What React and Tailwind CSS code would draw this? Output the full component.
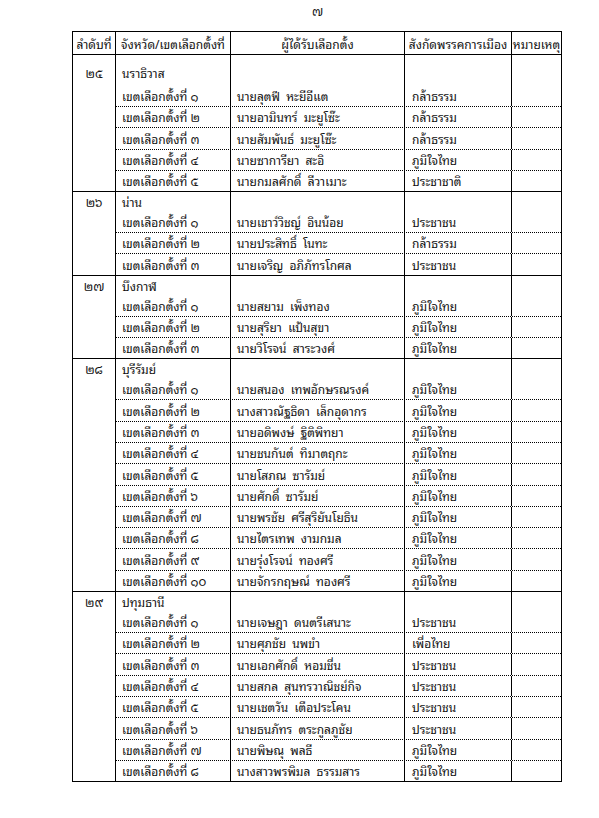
// Thai election results table, page 7
const thaiDigits = '๐๑๒๓๔๕๖๗๘๙'
const toThai = (n) => String(n).split('').map((d) => thaiDigits[+d]).join('')

const SECTIONS = [
  {
    no: 25,
    province: 'นราธิวาส',
    rows: [
      ['นายลุตฟี  หะยีอีแต', 'กล้าธรรม'],
      ['นายอามินทร์  มะยูโซ๊ะ', 'กล้าธรรม'],
      ['นายสัมพันธ์  มะยูโซ๊ะ', 'กล้าธรรม'],
      ['นายซาการียา  สะอิ', 'ภูมิใจไทย'],
      ['นายกมลศักดิ์  ลีวาเมาะ', 'ประชาชาติ'],
    ],
  },
  {
    no: 26,
    province: 'น่าน',
    rows: [
      ['นายเชาว์วิชญ์  อินน้อย', 'ประชาชน'],
      ['นายประสิทธิ์  โนทะ', 'กล้าธรรม'],
      ['นายเจริญ  อภิภัทรโกศล', 'ประชาชน'],
    ],
  },
  {
    no: 27,
    province: 'บึงกาฬ',
    rows: [
      ['นายสยาม  เพ็งทอง', 'ภูมิใจไทย'],
      ['นายสุริยา  แป้นสุขา', 'ภูมิใจไทย'],
      ['นายวิโรจน์  สาระวงศ์', 'ภูมิใจไทย'],
    ],
  },
  {
    no: 28,
    province: 'บุรีรัมย์',
    rows: [
      ['นายสนอง  เทพอักษรณรงค์', 'ภูมิใจไทย'],
      ['นางสาวณัฐธิดา  เล็กอุดากร', 'ภูมิใจไทย'],
      ['นายอดิพงษ์  ฐิติพิทยา', 'ภูมิใจไทย'],
      ['นายชนกันต์  ทิมาตฤกะ', 'ภูมิใจไทย'],
      ['นายโสภณ  ซารัมย์', 'ภูมิใจไทย'],
      ['นายศักดิ์  ซารัมย์', 'ภูมิใจไทย'],
      ['นายพรชัย  ศรีสุริยันโยธิน', 'ภูมิใจไทย'],
      ['นายไตรเทพ  งามกมล', 'ภูมิใจไทย'],
      ['นายรุ่งโรจน์  ทองศรี', 'ภูมิใจไทย'],
      ['นายจักรกฤษณ์  ทองศรี', 'ภูมิใจไทย'],
    ],
  },
  {
    no: 29,
    province: 'ปทุมธานี',
    rows: [
      ['นายเจษฎา  ดนตรีเสนาะ', 'ประชาชน'],
      ['นายศุภชัย  นพขำ', 'เพื่อไทย'],
      ['นายเอกศักดิ์  หอมชื่น', 'ประชาชน'],
      ['นายสกล  สุนทรวาณิชย์กิจ', 'ประชาชน'],
      ['นายเชตวัน  เตือประโคน', 'ประชาชน'],
      ['นายธนภัทร  ตระกูลภูชัย', 'ประชาชน'],
      ['นายพิษณุ  พลธี', 'ภูมิใจไทย'],
      ['นางสาวพรพิมล  ธรรมสาร', 'ภูมิใจไทย'],
    ],
  },
]

function Row({ i, name, party, province, tall }) {
  // first row of a section carries the province name on top, text on the bottom line
  const first = province != null
  const h = first ? (tall ? 'h-[51px]' : 'h-[40px]') : 'h-[21.3px] border-t border-dotted border-black'
  return (
    <div className={`flex ${h}`}>
      <div className={`w-[115px] border-r border-black px-[6px] flex flex-col pb-[2px] ${first ? 'justify-between' : 'justify-end'} ${tall ? 'pt-[9px]' : 'pt-[1px]'}`}>
        {first && <span>{province}</span>}
        <span className="whitespace-pre">เขตเลือกตั้งที่ {toThai(i)}</span>
      </div>
      <div className="w-[174px] border-r border-black px-[6px] flex items-end pb-[2px]">
        <span className="whitespace-pre">{name}</span>
      </div>
      <div className="w-[107px] border-r border-black px-[7px] flex items-end pb-[2px]">
        <span>{party}</span>
      </div>
      <div className="flex-1" />
    </div>
  )
}

export default function App() {
  return (
    <div className="w-[599px] h-[818px] bg-white text-[#111] text-[12px] leading-[17px] font-['Noto_Sans_Thai_Looped','Noto_Serif_Thai','Tahoma','Noto_Sans_Thai','DejaVu_Sans',sans-serif]">
      <div className="pt-[2px] h-[31px] text-center text-[12px] pl-[36px]">๗</div>
      <div className="ml-[72px] w-[490px] border border-black">
        <div className="flex h-[22px] items-center text-center">
          <div className="w-[43px] h-full border-r border-black flex items-center justify-center">ลำดับที่</div>
          <div className="w-[115px] h-full border-r border-black flex items-center justify-center">จังหวัด/เขตเลือกตั้งที่</div>
          <div className="w-[174px] h-full border-r border-black flex items-center justify-center">ผู้ได้รับเลือกตั้ง</div>
          <div className="w-[107px] h-full border-r border-black flex items-center justify-center">สังกัดพรรคการเมือง</div>
          <div className="flex-1 h-full flex items-center justify-center">หมายเหตุ</div>
        </div>
        {SECTIONS.map((s, si) => (
          <div key={s.no} className="flex border-t border-black">
            <div className={`w-[43px] border-r border-black text-center ${si === 0 ? 'pt-[9px]' : 'pt-[1px]'}`}>
              {toThai(s.no)}
            </div>
            <div className="flex-1">
              {s.rows.map(([name, party], ri) => (
                <Row
                  key={ri}
                  i={ri + 1}
                  name={name}
                  party={party}
                  province={ri === 0 ? s.province : null}
                  tall={si === 0}
                />
              ))}
            </div>
          </div>
        ))}
      </div>
    </div>
  )
}
